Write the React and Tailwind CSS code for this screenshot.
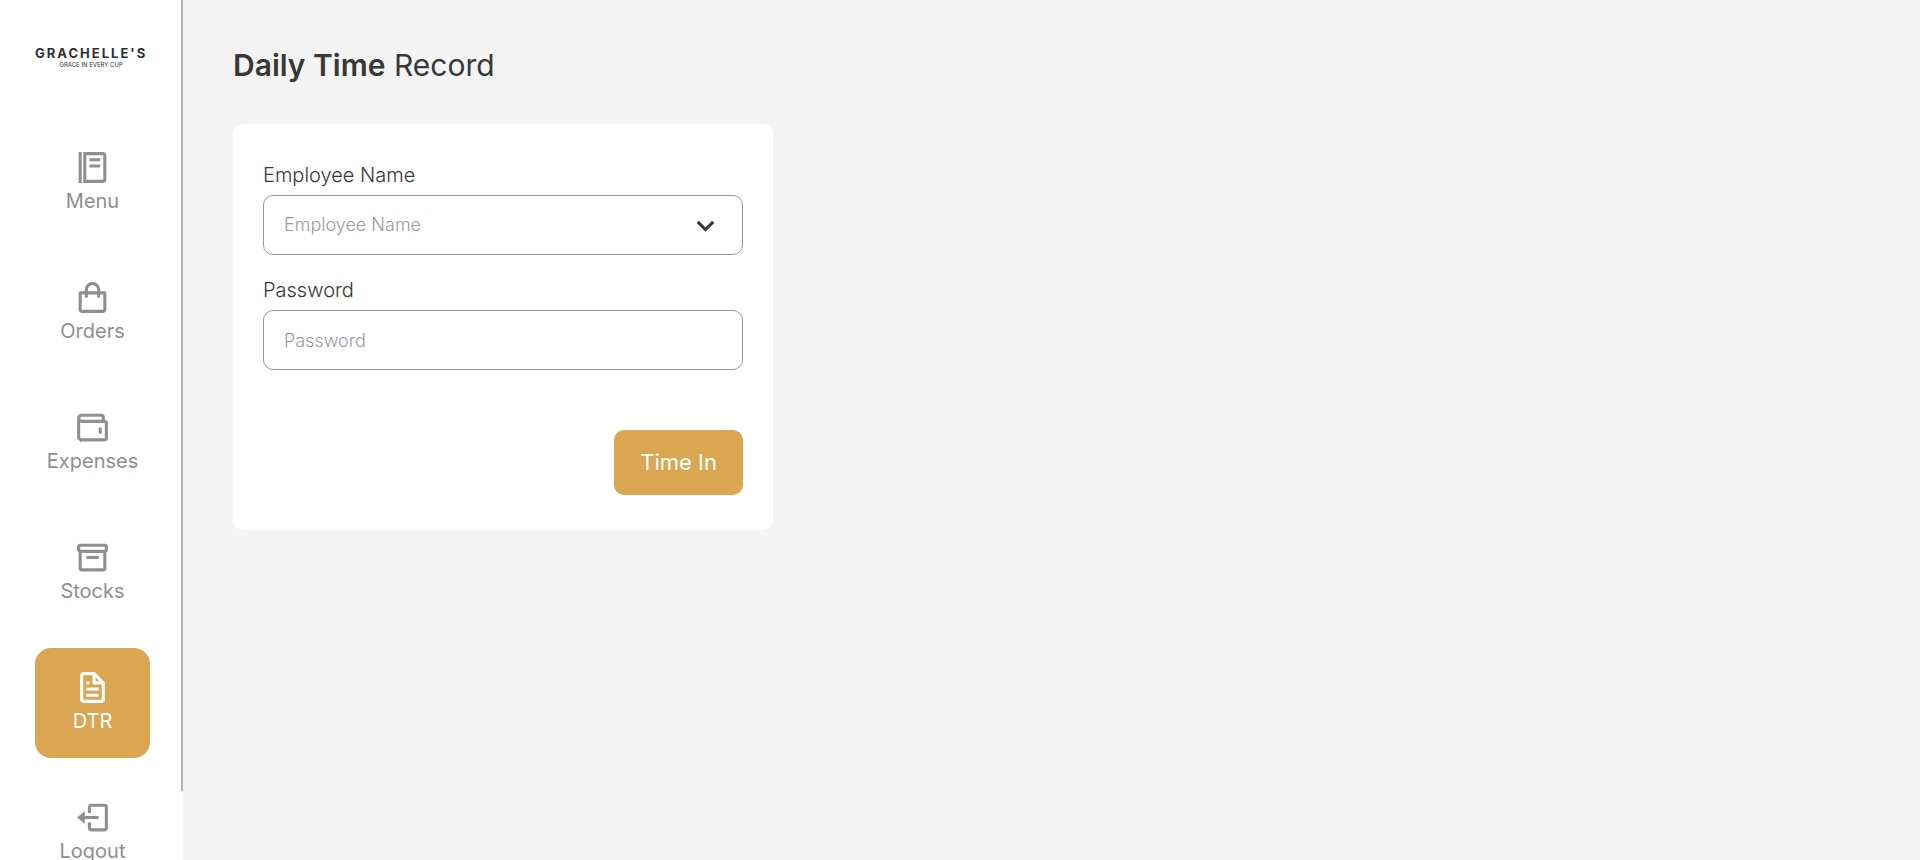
import { useState } from 'react';
import {
  BiBox,
  BiChevronDown,
  BiFile,
  BiFoodMenu,
  BiLogOut,
  BiShoppingBag,
  BiWallet,
} from 'react-icons/bi';
import { clsx } from 'clsx';

const navItems = [
  { label: 'Menu', icon: BiFoodMenu },
  { label: 'Orders', icon: BiShoppingBag },
  { label: 'Expenses', icon: BiWallet },
  { label: 'Stocks', icon: BiBox },
  { label: 'DTR', icon: BiFile },
  { label: 'Logout', icon: BiLogOut },
];

const Logo = () => (
  <div className="flex flex-col items-center self-start text-[#2f2f2f]">
    <span className="text-[13px] leading-4 font-bold tracking-[2px]">GRACHELLE'S</span>
    <span className="text-[6px] leading-2">GRACE IN EVERY CUP</span>
  </div>
);

const Sidebar = ({ active, onSelect }) => (
  <aside className="flex h-[92vh] shrink-0 flex-col items-center border-r-2 border-[#b3b3b3] pr-[31px] pl-[35px] pt-[45px]">
    <Logo />
    <nav className="mt-[59px] flex flex-col gap-5">
      {navItems.map(({ label, icon: Icon }) => (
        <a
          key={label}
          href={`#${label.toLowerCase()}`}
          onClick={() => onSelect(label)}
          className={clsx(
            'flex h-[110px] w-[115px] flex-col items-center rounded-2xl pt-[21px] text-xl leading-[30px]',
            active === label ? 'bg-[#daa652] text-white' : 'text-[#8f8f8f]'
          )}
        >
          <Icon className="size-[37px]" />
          {label}
        </a>
      ))}
    </nav>
  </aside>
);

const TimeRecordForm = () => {
  const [employee, setEmployee] = useState('');
  const [password, setPassword] = useState('');

  return (
    <form
      onSubmit={(e) => e.preventDefault()}
      className="flex w-full max-w-[540px] flex-col rounded-[10px] bg-white px-[30px] pt-9 pb-[35px]"
    >
      <label htmlFor="employee" className="text-xl leading-[30px] font-light">
        Employee Name
      </label>
      <div className="relative mt-[5px]">
        <select
          id="employee"
          value={employee}
          onChange={(e) => setEmployee(e.target.value)}
          className="h-[60px] w-full appearance-none rounded-[10px] border border-[#979797] bg-white px-5 text-lg font-light text-[#979ba3]"
        >
          <option value="">Employee Name</option>
        </select>
        <BiChevronDown className="pointer-events-none absolute top-1/2 right-[19px] size-[37px] -translate-y-1/2" />
      </div>

      <label htmlFor="password" className="mt-5 text-xl leading-[30px] font-light">
        Password
      </label>
      <input
        id="password"
        type="password"
        placeholder="Password"
        value={password}
        onChange={(e) => setPassword(e.target.value)}
        className="mt-[5px] h-[60px] w-full rounded-[10px] border border-[#979797] bg-white px-5 text-lg font-light placeholder:text-[#979ba3]"
      />

      <button
        type="submit"
        className="mt-[60px] h-[65px] self-end rounded-[10px] bg-[#daa652] px-[26px] text-[22px] text-white"
      >
        Time In
      </button>
    </form>
  );
};

const App = () => {
  const [active, setActive] = useState('DTR');

  return (
    <div className="flex h-screen overflow-hidden bg-white font-['Inter',sans-serif] text-[#383838]">
      <Sidebar active={active} onSelect={setActive} />
      <main className="flex-1 bg-[#f4f4f4] px-[50px] pt-[42px]">
        <h1 className="mb-9 text-[30px] leading-[46px]">
          <span className="font-semibold">Daily Time</span> Record
        </h1>
        <TimeRecordForm />
      </main>
    </div>
  );
};

export default App;
